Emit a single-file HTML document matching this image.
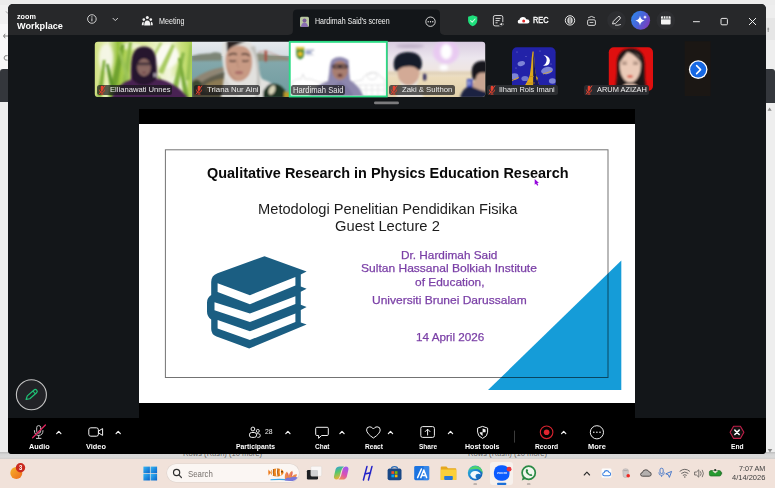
<!DOCTYPE html>
<html lang="en">
<head>
<meta charset="utf-8">
<title>Zoom Workplace - Meeting</title>
<style>
html,body{margin:0;padding:0;}
body{width:775px;height:488px;overflow:hidden;background:#f1f1f1;font-family:"Liberation Sans",sans-serif;}
#root{position:relative;width:775px;height:488px;overflow:hidden;background:#f3f3f3;}
.a{position:absolute;}
.t{position:absolute;white-space:nowrap;line-height:1;transform-origin:0 50%;display:block;}
svg{position:absolute;overflow:visible;}
</style>
</head>
<body>
<div id="root">

<!-- background app peeking behind the zoom window -->
<div class="a" style="left:0;top:0;width:775px;height:6px;background:#ececec;"></div>
<div class="a" style="left:0;top:5px;width:10px;height:18.500px;background:#f1f1f1;"></div>
<div class="a" style="left:0;top:23.500px;width:10px;height:46px;background:#f8f8f8;"></div>
<div class="a" style="left:0;top:69.300px;width:10px;height:32.500px;background:#34373c;border-radius:3px 0 0 0;"></div>
<div class="a" style="left:0;top:101.800px;width:10px;height:352px;background:#ededed;"></div>
<div class="a" style="left:764px;top:5px;width:11px;height:449px;background:#eeeeee;"></div>
<div class="a" style="left:764px;top:18px;width:14px;height:22px;background:#e6e6e6;border-radius:0 0 0 0;"></div>
<div class="a" style="left:764px;top:69.300px;width:10.500px;height:33.500px;background:#34373c;border-radius:0 3px 0 0;"></div>
<div class="a" style="left:0;top:452px;width:775px;height:7.200px;background:linear-gradient(#bdbdbd 0%,#d6d6d6 35%,#dadada 70%,#d2cfcd 100%);"></div>
<svg style="left:0;top:0" width="775" height="488" viewBox="0 0 775 488">
<path d="M767.500,110.800 L771.700,110.800 L769.600,107.600Z" fill="#8a8a8a"/>
<path d="M5.200,33.800 L3.600,36 L5.200,38.200 M3.600,36 L8,36" stroke="#666" stroke-width="0.800" fill="none"/>
<path d="M7.600,55.600 Q4.200,55 4,58 Q4.200,60.600 7.600,60.200" stroke="#666" stroke-width="0.800" fill="none"/>
<path d="M6,11.400 L8,13.600" stroke="#777" stroke-width="0.700"/>
<path d="M767.400,29 L769.200,29 M768.200,27.600 L768.200,32" stroke="#777" stroke-width="0.700"/>
</svg>


<div class="a" id="win" style="left:7.800px;top:4.200px;width:758.500px;height:449.400px;background:#131619;border-radius:5px 5px 4px 4px;overflow:hidden;">
  <div class="a" style="left:0;top:0;width:100%;height:30.600px;background:#27282a;"></div>
  <div class="a" style="left:0;top:414.200px;width:100%;height:40px;background:#000;"></div>
</div>

<!-- title bar -->
<svg style="left:0;top:0" width="775" height="488" viewBox="0 0 775 488">
<path d="M288.500,34.900 Q292.900,34.900 292.900,30.600 L292.900,14 Q292.900,9.600 297.300,9.600 L435.600,9.600 Q440,9.600 440,14 L440,30.600 Q440,34.900 444.400,34.900 Z" fill="#131619"/>
<!-- small avatar in tab -->
<rect x="300" y="16.800" width="9" height="10.200" rx="1.500" fill="#b9c7a0"/>
<path d="M301,27 Q301.500,22.500 304.500,22.500 Q307.500,22.500 308,27Z" fill="#8a6fb0"/>
<circle cx="304.500" cy="20.600" r="2" fill="#7a5c9a"/>
<!-- ... in circle -->
<circle cx="430.500" cy="21.700" r="4.700" fill="none" stroke="#e6e6e6" stroke-width="0.900"/>
<circle cx="428.200" cy="21.700" r="0.700" fill="#e6e6e6"/><circle cx="430.500" cy="21.700" r="0.700" fill="#e6e6e6"/><circle cx="432.800" cy="21.700" r="0.700" fill="#e6e6e6"/>
<!-- info icon -->
<circle cx="91.900" cy="19" r="4.300" fill="none" stroke="#e0e0e0" stroke-width="0.900"/>
<rect x="91.400" y="18.300" width="1" height="3" fill="#e0e0e0"/><circle cx="91.900" cy="16.900" r="0.650" fill="#e0e0e0"/>
<path d="M113,18.300 L115.300,20.600 L117.600,18.300" stroke="#e0e0e0" stroke-width="0.900" fill="none" stroke-linecap="round" stroke-linejoin="round"/>
<!-- people/paw icon -->
<circle cx="147.300" cy="17.600" r="1.500" fill="#f2f2f2"/><circle cx="143.800" cy="19.600" r="1.300" fill="#f2f2f2"/><circle cx="150.800" cy="19.600" r="1.300" fill="#f2f2f2"/>
<path d="M144.200,25.600 Q144.200,20.400 147.300,20.400 Q150.400,20.400 150.400,25.600Z" fill="#f2f2f2"/>
<path d="M141.800,25.200 Q141.800,21.800 143.700,21.800 L143.700,25.200Z M152.800,25.200 Q152.800,21.800 150.900,21.800 L150.900,25.200Z" fill="#f2f2f2"/>
<!-- shield -->
<path d="M472.700,15.200 L477.300,16.800 L477.300,20.600 Q477.300,24.400 472.700,26.300 Q468.100,24.400 468.100,20.600 L468.100,16.800Z" fill="#1ee07c"/>
<path d="M470.600,20.600 L472.200,22.200 L475,19" stroke="#c4f6da" stroke-width="1.100" fill="none" stroke-linecap="round" stroke-linejoin="round"/>
<!-- doc icon -->
<rect x="493.400" y="15.500" width="9.400" height="10.400" rx="1.700" fill="none" stroke="#dcdcdc" stroke-width="0.950"/>
<path d="M495.500,18.400 L500.600,18.400 M495.500,20.600 L499.600,20.600 M495.500,22.800 L497.600,22.800" stroke="#e6e6e6" stroke-width="0.950"/>
<rect x="499.300" y="22" width="4.600" height="4.600" fill="#27282a"/>
<path d="M499.800,23.700 L500.900,23.700 L502.200,22.600 L502.200,25.800 L500.900,24.800 L499.800,24.800Z" fill="#e6e6e6"/>
<path d="M503,23.300 Q503.800,24.200 503,25.200" stroke="#e6e6e6" stroke-width="0.500" fill="none"/>
<!-- REC cloud -->
<path d="M519.500,23.600 Q517.700,23.600 517.700,21.700 Q517.700,20 519.500,19.800 Q520,17 523,17 Q525.600,17 526.300,19.200 Q529.300,19 529.500,21.500 Q529.500,23.600 527.300,23.600Z" fill="#ffffff"/>
<circle cx="523.700" cy="21" r="1.500" fill="#e02828"/>
<!-- circle (globe) icon -->
<circle cx="570" cy="20.400" r="4.700" fill="none" stroke="#e6e6e6" stroke-width="1"/>
<ellipse cx="570" cy="20.400" rx="2.300" ry="3.200" fill="#bdbdbd" stroke="#e6e6e6" stroke-width="0.700"/>
<path d="M570,17.400 L570,23.800" stroke="#27282a" stroke-width="0.600"/>
<!-- device/cast icon -->
<rect x="587.600" y="19.800" width="7.800" height="5.600" rx="1.300" fill="none" stroke="#e6e6e6" stroke-width="0.900"/>
<path d="M589.600,22.500 L593.400,22.500" stroke="#e6e6e6" stroke-width="0.800"/>
<path d="M588.400,17.600 Q591.500,15 594.600,17.600" stroke="#e6e6e6" stroke-width="0.900" fill="none" stroke-linecap="round"/>
<!-- pen in circle -->
<circle cx="616.500" cy="20.400" r="9.300" fill="#2d2e31"/>
<path d="M612.600,24 L613.300,21.400 L617.900,16.800 Q619,15.900 620,16.900 Q620.900,17.900 620,18.900 L615.300,23.500Z" fill="none" stroke="#f0f0f0" stroke-width="0.900" stroke-linejoin="round"/>
<path d="M615.500,25.200 Q618,25.600 620.500,24.600" stroke="#f0f0f0" stroke-width="0.800" fill="none" stroke-linecap="round"/>
<!-- AI companion -->
<circle cx="640.600" cy="20.200" r="9.500" fill="url(#gai)"/>
<path d="M640,15.800 Q640.600,19.700 644.600,20.600 Q640.600,21.500 640,25.400 Q639.400,21.500 635.400,20.600 Q639.400,19.700 640,15.800Z" fill="#ffffff"/>
<path d="M645,15.200 Q645.300,16.800 646.900,17.100 Q645.300,17.400 645,19 Q644.700,17.400 643.100,17.100 Q644.700,16.800 645,15.200Z" fill="#ffffff"/>
<!-- clapper -->
<circle cx="665.800" cy="20.400" r="9.300" fill="#2d2e31"/>
<rect x="661" y="16.200" width="9.600" height="8.200" rx="0.900" fill="#f4f4f4"/>
<path d="M661,19 L670.600,19" stroke="#2d2e31" stroke-width="0.700"/>
<path d="M663.400,16 L663.400,18.600 M665.800,16 L665.800,18.600 M668.200,16 L668.200,18.600" stroke="#2d2e31" stroke-width="0.800"/>
<!-- window controls -->
<path d="M693,21.700 L699.800,21.700" stroke="#e8e8e8" stroke-width="1"/>
<rect x="721" y="18.400" width="6.400" height="6.400" rx="1" fill="none" stroke="#e8e8e8" stroke-width="1"/>
<path d="M749,18 L756,25 M756,18 L749,25" stroke="#f0f0f0" stroke-width="1"/>
</svg>
<span class="t" style="left:17.30px;top:13.18px;font-size:7.7px;font-weight:700;color:#ffffff;transform:scaleX(0.9401);">zoom</span>
<span class="t" style="left:17.30px;top:21.40px;font-size:9.8px;font-weight:700;color:#ffffff;transform:scaleX(0.9295);">Workplace</span>
<span class="t" style="left:158.60px;top:17.39px;font-size:8.4px;font-weight:400;color:#f0f0f0;transform:scaleX(0.8566);">Meeting</span>
<span class="t" style="left:315.40px;top:17.96px;font-size:8.2px;font-weight:400;color:#f4f4f4;transform:scaleX(0.8618);">Hardimah Said's screen</span>
<span class="t" style="left:532.80px;top:16.32px;font-size:8.6px;font-weight:400;color:#ffffff;transform:scaleX(0.8536);-webkit-text-stroke:0.350px #fff;">REC</span>
<!-- gallery strip -->
<svg style="left:0;top:0" width="775" height="488" viewBox="0 0 775 488">
<defs>
<filter id="bs" x="-10%" y="-10%" width="120%" height="120%"><feGaussianBlur stdDeviation="0.450"/></filter>
<filter id="b1" x="-20%" y="-20%" width="140%" height="140%"><feGaussianBlur stdDeviation="0.8"/></filter>
<filter id="b2" x="-20%" y="-20%" width="140%" height="140%"><feGaussianBlur stdDeviation="1.6"/></filter>
<filter id="b3" x="-30%" y="-30%" width="160%" height="160%"><feGaussianBlur stdDeviation="3"/></filter>
<clipPath id="c1"><path d="M97.800,41.700 L192,41.700 L192,96.900 L97.800,96.900 Q94.800,96.900 94.800,93.900 L94.800,44.700 Q94.800,41.700 97.800,41.700Z"/></clipPath>
<clipPath id="c2"><rect x="192" y="41.700" width="97" height="55.200"/></clipPath>
<clipPath id="c3"><rect x="290.700" y="42.800" width="95.200" height="52.700"/></clipPath>
<clipPath id="c4"><path d="M387.700,41.700 L482.200,41.700 Q485.200,41.700 485.200,44.700 L485.200,93.900 Q485.200,96.900 482.200,96.900 L387.700,96.900Z"/></clipPath>
<clipPath id="c5"><rect x="512" y="47.3" width="43.6" height="43.6" rx="5"/></clipPath>
<clipPath id="c6"><rect x="608.8" y="47.3" width="44.2" height="43.6" rx="5"/></clipPath>
<linearGradient id="g1" x1="0" x2="1" y1="0" y2="0">
 <stop offset="0" stop-color="#cfe07e"/><stop offset="0.140" stop-color="#e8f0bc"/><stop offset="0.240" stop-color="#97c23e"/>
 <stop offset="0.340" stop-color="#b6d65e"/><stop offset="0.480" stop-color="#dcea9e"/><stop offset="0.620" stop-color="#e8f0c0"/>
 <stop offset="0.760" stop-color="#f2f5dc"/><stop offset="0.880" stop-color="#cbe27e"/><stop offset="1" stop-color="#aed254"/>
</linearGradient>
<linearGradient id="g2s" x1="0" x2="0" y1="0" y2="1"><stop offset="0" stop-color="#e6eaee"/><stop offset="1" stop-color="#d4dce2"/></linearGradient>
<linearGradient id="g2w" x1="0" x2="0" y1="0" y2="1"><stop offset="0" stop-color="#86aaad"/><stop offset="1" stop-color="#6f9a9f"/></linearGradient>
<linearGradient id="g4" x1="0" x2="0" y1="0" y2="1"><stop offset="0" stop-color="#d8cbe0"/><stop offset="0.300" stop-color="#ece6ee"/><stop offset="0.520" stop-color="#efe6e2"/><stop offset="0.640" stop-color="#ecdcbc"/><stop offset="1" stop-color="#e0d0aa"/></linearGradient>
<linearGradient id="gai" x1="0" y1="0.200" x2="1" y2="0.800"><stop offset="0" stop-color="#2f86ea"/><stop offset="0.500" stop-color="#4a62d8"/><stop offset="1" stop-color="#8338b8"/></linearGradient>
</defs>

<!-- tile 1 : grass + purple hijab -->
<g clip-path="url(#c1)">
 <rect x="94" y="41" width="99" height="57" fill="url(#g1)"/>
 <g filter="url(#b2)">
  <ellipse cx="106" cy="58" rx="7" ry="14" fill="#f6f7ea" opacity="0.900"/>
  <ellipse cx="166" cy="56" rx="13" ry="12" fill="#fbfbf3" opacity="0.950"/>
  <ellipse cx="178" cy="84" rx="9" ry="9" fill="#f4f6e4" opacity="0.800"/>
  <ellipse cx="131" cy="46" rx="10" ry="4" fill="#f4f6de" opacity="0.800"/>
 </g>
 <g filter="url(#b1)">
  <path d="M97,97 L103,60 L105.500,60 L102,97Z" fill="#7fae3a"/>
  <path d="M108,97 L121,44 L124.500,45 L115,97Z" fill="#6fa22f"/>
  <path d="M112,97 L106,64 L108.500,64 L117,97Z" fill="#5d942a"/>
  <path d="M120,97 L129,42 L132,42 L126,97Z" fill="#8fba4a"/>
  <path d="M126,80 L118,50 L120.500,50 L130,80Z" fill="#9cc458"/>
  <path d="M158,72 L172,44 L175,45.500 L163,74Z" fill="#a9cb62"/>
  <path d="M150,58 L160,42 L162.500,43 L153,60Z" fill="#b7d376"/>
  <path d="M170,97 L182,52 L185,53 L176,97Z" fill="#8ab848"/>
  <path d="M184,97 L178,58 L180.500,58 L189,97Z" fill="#79ab3a"/>
  <path d="M164,97 L157,76 L159.500,76 L168,97Z" fill="#a3c765"/>
  <path d="M186,80 L190,44 L192.500,44 L190,80Z" fill="#9ac254"/>
 </g>
 <g filter="url(#b1)">
  <path d="M111,99 Q116,84 131,79.500 Q130.500,70 131.500,61 Q133,46.600 144,46.600 Q155,46.600 156.200,61 Q157.200,70 156.600,78.500 Q176,82 189,99 Z" fill="#4a2352"/>
  <path d="M132.400,79.500 Q131,68 132,60 Q133.600,47 144,47 Q154.400,47 155.700,60 Q156.800,70 156,79.500 Q150,85 144,85 Q138,85 132.400,79.500Z" fill="#27152d"/>
  <ellipse cx="144" cy="67.400" rx="6.900" ry="8.800" fill="#8a6862"/>
  <rect x="137.600" y="62.400" width="12.800" height="2.800" rx="1.200" fill="#3a2c36" opacity="0.900"/>
  <ellipse cx="144" cy="72.600" rx="2.200" ry="0.900" fill="#6d3f45"/>
  <ellipse cx="154.600" cy="75" rx="1" ry="2" fill="#cfc6d6"/>
 </g>
</g>

<!-- tile 2 : bridge bg + white hijab -->
<g clip-path="url(#c2)">
 <rect x="192" y="41" width="98" height="16" fill="url(#g2s)"/>
 <rect x="192" y="56" width="98" height="42" fill="url(#g2w)"/>
 <g filter="url(#b1)">
  <path d="M192,56 Q200,53 210,53.500 Q217,51 222,54 L222,60.500 L192,61Z" fill="#7d8577"/>
  <path d="M254,54 Q262,52 270,55 Q280,56 289,57 L289,60.500 L254,61Z" fill="#8b8d7c"/>
  <rect x="264.600" y="50.500" width="2.400" height="11" fill="#a8473a"/>
  <path d="M258,52 L266,51 L289,60" stroke="#b06a5a" stroke-width="0.600" fill="none"/>
  <path d="M192,80 Q205,70 226,66.500 L228,70 Q212,75 200,86 L198,98 L192,98Z" fill="#8f8573"/>
  <path d="M196,86 Q210,75 228,71 L229,78 Q215,80 206,90 L204,98 L196,98Z" fill="#625e4e"/>
  <path d="M192,82 Q197,77 201,82 L203,98 L192,98Z" fill="#3e4a30"/>
  <path d="M192,92 L224,90 L224,98 L192,98Z" fill="#4a4434"/>
  <path d="M206,84 Q218,78 228,79 L228,90 L206,92Z" fill="#8c7a52"/>
 </g>
 <g filter="url(#b1)">
  <path d="M221,98 Q223.500,84 224.500,74 Q220.500,54 223,42 L249,41 Q257,50 258.500,64 Q259,74 262,79 Q276,83 283,98Z" fill="#e2e1de"/>
  <path d="M226.500,41 L246,41 Q240,43.500 234,46 Q229,48.500 227,53Z" fill="#2a2422"/>
  <path d="M225.500,58 Q226.500,46.500 238,45.500 Q250.500,45.500 252,58 Q253,68 249,75 Q244,81.500 238.500,81.500 Q232,81.500 228,74 Q225,67 225.500,58Z" fill="#c89a84"/>
  <path d="M228.500,55.600 Q232.500,52 237,54.600" stroke="#3d2a24" stroke-width="1.400" fill="none"/>
  <path d="M241.500,54.600 Q245.500,52.400 249.700,56" stroke="#3d2a24" stroke-width="1.400" fill="none"/>
  <path d="M229.500,60.400 Q232.500,62.400 235.800,60.600" stroke="#3f2b26" stroke-width="1.300" fill="none"/>
  <path d="M242.300,60.600 Q245.600,62.400 248.800,60.200" stroke="#3f2b26" stroke-width="1.300" fill="none"/>
  <path d="M237.600,60 Q236.600,66 238.800,68.200" stroke="#b58974" stroke-width="0.900" fill="none"/>
  <ellipse cx="239" cy="72.600" rx="4.200" ry="1.700" fill="#a96a66"/>
  <path d="M228,68 Q230,76 236,80" stroke="#b58a76" stroke-width="1.600" fill="none" opacity="0.600"/>
  <path d="M250,47 Q257.500,58 257,80 L255,98 L259,98 Q262,72 255,46Z" fill="#c3c3bf"/>
  <path d="M224.500,74 Q226,82 232,86 Q238,88 246,84 Q244,92 236,98 L221,98 Q223,86 224.500,74Z" fill="#d5d4d0"/>
  <path d="M263,98 Q262,88 270,84 Q280,82 286,92 L289,98Z" fill="#1f3320"/>
  <ellipse cx="272" cy="90" rx="3" ry="5" fill="#d8d4b8" transform="rotate(25 272 90)"/>
  <rect x="284" y="92" width="6" height="6" fill="#b79a2a"/>
 </g>
</g>

<!-- tile 3 : active speaker (green border) -->
<rect x="289.750" y="41.850" width="97.100" height="54.600" fill="#ffffff" stroke="#2bdc85" stroke-width="1.900"/>
<g clip-path="url(#c3)">
 <g filter="url(#b1)" opacity="0.9">
  <path d="M292,96 L292,82 Q296,78 301,79 L303,74 L305,79 Q312,78 318,82 L326,82 L326,96Z" fill="none" stroke="#d4d4d6" stroke-width="0.800"/>
  <path d="M296,96 L296,86 L324,86 L324,96 M300,86 L300,96 M306,86 L306,96 M312,86 L312,96 M318,86 L318,96" stroke="#dcdcde" stroke-width="0.700" fill="none"/>
  <path d="M352,96 L352,82 L362,80 Q366,72 370,74 Q376,70 380,76 L385,80 L385,96Z" fill="none" stroke="#d0d0d3" stroke-width="0.800"/>
  <path d="M356,96 L356,85 L384,85 M360,85 L360,96 M366,85 L366,96 M372,85 L372,96 M378,85 L378,96 M356,90 L385,90" stroke="#d6d6d9" stroke-width="0.700" fill="none"/>
  <ellipse cx="372" cy="76" rx="5" ry="3.500" fill="none" stroke="#d4d4d6" stroke-width="0.800"/>
 </g>
 <g filter="url(#b1)">
  <path d="M296.200,47 L304.200,47 L304.200,54 Q304.200,58 300.200,59.500 Q296.200,58 296.200,54Z" fill="#3f8a3a"/>
  <path d="M296.600,47 L303.800,47 L303.800,49.500 L296.600,49.500Z" fill="#e5c531"/>
  <circle cx="300.200" cy="54" r="2.300" fill="#efc321"/>
  <rect x="305.500" y="49.500" width="8.500" height="1.300" fill="#9aa0b8"/>
  <rect x="305.500" y="51.800" width="6" height="1.500" fill="#4a64a8"/>
  <rect x="305.500" y="54.300" width="8" height="0.900" fill="#b4b8c8"/>
 </g>
 <g filter="url(#b1)">
  <path d="M308,98 Q314,86 328,81 Q329.500,72 329.800,66 Q330.500,57 340,57 Q349,57.300 349,66 Q349,73 350,80 Q360,86 364,98Z" fill="#8d87ad"/>
  <path d="M326,98 Q330,86 340,82 Q350,86 354,98Z" fill="#7f79a2"/>
  <ellipse cx="340" cy="70.400" rx="7.900" ry="9.800" fill="#a97e70"/>
  <path d="M331.500,64 Q340,57.500 348.500,64 L348.500,60 Q340,55 331.500,60Z" fill="#8d87ad"/>
  <rect x="332" y="64.600" width="16" height="3.800" rx="1.600" fill="#32282c"/>
  <rect x="333.400" y="65.500" width="5.400" height="2.100" rx="0.900" fill="#8b675e"/>
  <rect x="341.200" y="65.500" width="5.400" height="2.100" rx="0.900" fill="#8b675e"/>
  <ellipse cx="340" cy="75.200" rx="2.500" ry="1.500" fill="#5e2f30"/>
 </g>
</g>

<!-- tile 4 : room with two people -->
<g clip-path="url(#c4)">
 <rect x="387" y="41" width="99" height="57" fill="url(#g4)"/>
 <g filter="url(#b2)">
  <ellipse cx="446" cy="52" rx="13" ry="12" fill="#e9c8f2" opacity="0.9"/>
  <ellipse cx="446.200" cy="51.700" rx="5.600" ry="7.600" fill="#ffffff"/>
  <ellipse cx="443.800" cy="67.400" rx="4.200" ry="3" fill="#ffffff"/>
  <ellipse cx="410" cy="46" rx="14" ry="2" fill="#bfb0c8"/>
  <rect x="387" y="72" width="99" height="2" fill="#cdb98e" opacity="0.7"/>
 </g>
 <g filter="url(#b1)">
  <rect x="423" y="73.500" width="3.400" height="7" rx="1.500" fill="#3b3560"/>
  <path d="M396,98 Q398,90 402,86 Q397,78 398,68 L418,66 Q421,78 416,86 Q421,90 424,98Z" fill="#e8e4de"/>
  <ellipse cx="408.500" cy="73" rx="10.800" ry="12.500" fill="#d3aa96"/>
  <path d="M393.800,66 Q392.500,53 407,52 Q421.500,51.500 422,64 Q421.500,69 419,70.500 Q414,65 406,66.500 Q400,67 397,71.500 Q394,70 393.800,66Z" fill="#191a2a"/>
  <path d="M470,98 Q470,84 476,80 Q471,70 476,64 Q481,60 486,62 L486,98Z" fill="#c9a592"/>
  <path d="M472.500,78 Q469.500,64.500 478,61.500 Q484,60 487,62 L487,73 Q480,71.500 477,75 L475,81Z" fill="#15151f"/>
  <path d="M460,98 Q462,88 470,86 L480,90 L487,92 L487,98Z" fill="#1b2142"/>
  <rect x="467" y="79" width="5.500" height="8" fill="#2c3fb6"/>
  <rect x="468.600" y="80.500" width="1.200" height="5" fill="#dfe3f5"/>
 </g>
</g>

<!-- tile 5 : avatar (eiffel / night sky) -->
<g clip-path="url(#c5)">
 <rect x="511" y="46" width="46" height="46" fill="#2222a8"/>
 <g filter="url(#bs)">
  <ellipse cx="521.300" cy="63.600" rx="3.800" ry="2.400" fill="#7d84d6" transform="rotate(-15 521.300 63.600)"/>
  <ellipse cx="547" cy="70.500" rx="6" ry="3.500" fill="#7d84d6" transform="rotate(-12 547 70.500)"/>
  <ellipse cx="514.500" cy="76.500" rx="4" ry="3.300" fill="#7d84d6"/>
  <ellipse cx="525" cy="78.500" rx="3.600" ry="2.600" fill="#6f76cf"/>
  <ellipse cx="552.500" cy="81" rx="3.600" ry="2.800" fill="#7d84d6"/>
  <path d="M512,80.500 L519,77.500" stroke="#d9a21f" stroke-width="1"/>
  <path d="M543,74 L552,71" stroke="#c9a246" stroke-width="0.900"/>
  <circle cx="517" cy="52" r="0.400" fill="#cfd2ff"/><circle cx="526" cy="56.500" r="0.400" fill="#cfd2ff"/><circle cx="540" cy="51" r="0.400" fill="#cfd2ff"/><circle cx="551" cy="64" r="0.400" fill="#cfd2ff"/><circle cx="516" cy="68" r="0.400" fill="#cfd2ff"/>
  <path d="M532.500,51.500 L533.700,51.500 L534.600,64 Q535.200,74 537.500,80 L541.500,92 L519,92 Q527.500,84 529.800,75 Q531.300,67 531.700,58Z" fill="#dca81f"/>
  <path d="M533.300,51.500 L534.600,64 Q535.200,74 537.500,80 L541.500,92 L533.100,92Z" fill="#17185a"/>
  <path d="M535.800,76 L538,78 L536.800,80.400Z" fill="#dca81f"/>
  <path d="M529.400,76.500 L534,76.500 M527,83 L535,83" stroke="#b98712" stroke-width="0.700"/>
  <path d="M543.600,55 Q548.600,58 545.600,63.500 Q544.600,65 543,65.600 Q549.600,66.600 549.900,60.500 Q549.600,56 543.600,55Z" fill="#ffffff"/>
 </g>
</g>

<!-- tile 6 : avatar (portrait on red) -->
<g clip-path="url(#c6)">
 <rect x="608" y="46" width="46" height="46" fill="#df0f0f"/>
 <g filter="url(#b1)">
  <path d="M614.500,92 Q617.500,78 617,66 Q616.500,49 630.500,48.500 Q644,48.500 644.500,64 Q644,78 646.500,92Z" fill="#1d1514"/>
  <path d="M620,92 Q622,86 626,84 L634,84 Q639,86 641,92Z" fill="#e6c3b0"/>
  <path d="M619.800,65 Q619.800,52.500 630,52 Q640.600,52.500 640.800,65 Q640.800,74.500 636,80 Q630,85 624.500,80 Q619.800,74.500 619.800,65Z" fill="#ebcab8"/>
  <path d="M619.400,63 Q620,52 628,51.200 Q624,56 619.400,63Z M627,51.400 Q638,50.600 641.200,63 Q636,55 627,51.400Z" fill="#1d1514"/>
  <path d="M622.200,63.800 L627,63.800 M633,63.800 L638,63.800" stroke="#5b3f36" stroke-width="1"/>
  <path d="M622,61.800 L627,61.400 M633,61.400 L638,61.800" stroke="#7b5a4e" stroke-width="0.600"/>
  <ellipse cx="630" cy="76.400" rx="2.900" ry="1.200" fill="#d8402f"/>
  <path d="M622,92 L627,86 L630,90 L633,86 L638,92Z" fill="#f2f2f2"/>
 </g>
</g>

<!-- next-page arrow -->
<rect x="684.600" y="41.200" width="26" height="54.800" fill="#1b1714"/>
<circle cx="698.200" cy="69.600" r="9.300" fill="#ffffff"/>
<circle cx="698.200" cy="69.600" r="8" fill="#1668e3"/>
<path d="M696.600,65.600 L700.600,69.600 L696.600,73.600" stroke="#fff" stroke-width="1.500" fill="none" stroke-linecap="round" stroke-linejoin="round"/>
<!-- drag handle -->
<rect x="374" y="101.500" width="25" height="2.800" rx="1.400" fill="#7b7b7d"/>
</svg>
<div class="a" style="left:96.6px;top:84.5px;width:75.2px;height:10.7px;background:rgba(24,24,27,0.700);border-radius:2.5px;"></div><svg style="left:98.0px;top:84.8px" width="8" height="10" viewBox="0 0 8 10"><rect x="2.7" y="0.8" width="2.6" height="5" rx="1.3" fill="#e8412f"/><path d="M1.3,4.6 Q1.3,7.4 4,7.4 Q6.700,7.400 6.700,4.600 M4,7.400 L4,9 M2.500,9.200 L5.500,9.200" stroke="#e8412f" stroke-width="0.800" fill="none"/><path d="M7,0.600 L1,9.400" stroke="#e8412f" stroke-width="1"/></svg><span class="t" style="left:109.60px;top:86.11px;font-size:7.9px;font-weight:400;color:#ececec;transform:scaleX(0.9666);">Ellianawati Unnes</span>
<div class="a" style="left:194px;top:84.5px;width:65.8px;height:10.7px;background:rgba(24,24,27,0.700);border-radius:2.5px;"></div><svg style="left:195.4px;top:84.8px" width="8" height="10" viewBox="0 0 8 10"><rect x="2.7" y="0.8" width="2.6" height="5" rx="1.3" fill="#e8412f"/><path d="M1.3,4.6 Q1.3,7.4 4,7.4 Q6.700,7.400 6.700,4.600 M4,7.400 L4,9 M2.500,9.200 L5.500,9.200" stroke="#e8412f" stroke-width="0.800" fill="none"/><path d="M7,0.600 L1,9.400" stroke="#e8412f" stroke-width="1"/></svg><span class="t" style="left:206.80px;top:86.11px;font-size:7.9px;font-weight:400;color:#ececec;transform:scaleX(0.9931);">Triana Nur Aini</span>
<div class="a" style="left:291.2px;top:84.5px;width:54.2px;height:10.7px;background:rgba(24,24,27,0.700);border-radius:2.5px;"></div><span class="t" style="left:293.00px;top:85.69px;font-size:8.4px;font-weight:400;color:#ececec;transform:scaleX(0.9107);">Hardimah Said</span>
<div class="a" style="left:388.8px;top:84.5px;width:65.8px;height:10.7px;background:rgba(24,24,27,0.700);border-radius:2.5px;"></div><svg style="left:390.2px;top:84.8px" width="8" height="10" viewBox="0 0 8 10"><rect x="2.7" y="0.8" width="2.6" height="5" rx="1.3" fill="#e8412f"/><path d="M1.3,4.6 Q1.3,7.4 4,7.4 Q6.700,7.400 6.700,4.600 M4,7.400 L4,9 M2.500,9.200 L5.500,9.200" stroke="#e8412f" stroke-width="0.800" fill="none"/><path d="M7,0.600 L1,9.400" stroke="#e8412f" stroke-width="1"/></svg><span class="t" style="left:401.80px;top:86.11px;font-size:7.9px;font-weight:400;color:#ececec;transform:scaleX(0.9810);">Zaki &amp; Sulthon</span>
<div class="a" style="left:486.6px;top:84.5px;width:71.0px;height:10.7px;background:#2b2d30;border-radius:2.5px;"></div><svg style="left:488.0px;top:84.8px" width="8" height="10" viewBox="0 0 8 10"><rect x="2.7" y="0.8" width="2.6" height="5" rx="1.3" fill="#e8412f"/><path d="M1.3,4.6 Q1.3,7.4 4,7.4 Q6.700,7.400 6.700,4.600 M4,7.400 L4,9 M2.500,9.200 L5.500,9.200" stroke="#e8412f" stroke-width="0.800" fill="none"/><path d="M7,0.600 L1,9.400" stroke="#e8412f" stroke-width="1"/></svg><span class="t" style="left:499.40px;top:86.11px;font-size:7.9px;font-weight:400;color:#ececec;transform:scaleX(0.9485);">Ilham Rois Imani</span>
<div class="a" style="left:583.8px;top:84.5px;width:64.8px;height:10.7px;background:rgba(43,45,48,0.92);border-radius:2.5px;"></div><svg style="left:585.2px;top:84.8px" width="8" height="10" viewBox="0 0 8 10"><rect x="2.7" y="0.8" width="2.6" height="5" rx="1.3" fill="#e8412f"/><path d="M1.3,4.6 Q1.3,7.4 4,7.4 Q6.700,7.400 6.700,4.600 M4,7.400 L4,9 M2.500,9.200 L5.500,9.200" stroke="#e8412f" stroke-width="0.800" fill="none"/><path d="M7,0.600 L1,9.400" stroke="#e8412f" stroke-width="1"/></svg><span class="t" style="left:596.80px;top:86.11px;font-size:7.9px;font-weight:400;color:#ececec;transform:scaleX(0.9414);">ARUM AZIZAH</span>
<!-- shared screen -->
<div class="a" style="left:139.100px;top:108.700px;width:495.600px;height:310.300px;background:#000;"></div>
<div class="a" id="slide" style="left:139.100px;top:124.200px;width:495.600px;height:278.900px;background:#fff;"></div>
<svg style="left:0;top:0" width="775" height="488" viewBox="0 0 775 488"><polygon points="621.300,260.500 621.300,390 488,390" fill="#159cd8"/><rect x="165.400" y="149.800" width="442.600" height="227.700" fill="none" stroke="#000" stroke-opacity="0.550" stroke-width="1"/><polygon points="609,273 621.5,260.5 621.5,390 609,390" fill="#159cd8" opacity="0.0"/></svg>
<svg style="left:0;top:0" width="775" height="488" viewBox="0 0 775 488">
<path fill="#1b5e82" d="M264.5,256.3 L306.6,271.4 L300.8,274.4 L300.8,286.6 L306.6,288.7 L300.8,291.8 L300.8,304.8 L306.6,306.9 L300.8,310 L300.8,322.4 L306.6,324.6 L249.2,348.6 L216.5,336.6 Q211.2,334.4 211.2,329 L211.2,319.5 Q207,316.5 207,311.5 L207,302.5 Q207,297.5 211.2,295 L211.2,282 Q211.2,275.5 217.5,273.2 Z"/>
<polygon fill="#fff" points="217.6,283.3 249.9,295.2 295.4,276.9 295.4,285.6 249.9,304.2 217.6,292.1"/>
<polygon fill="#fff" points="214.5,302.2 249.9,313.5 295.4,296.2 295.4,303.9 249.9,322.1 214.5,310.3"/>
<polygon fill="#fff" points="217.6,319.9 249.9,331.3 295.4,313.4 295.4,322 249.9,340 217.6,328.5"/>
</svg>
<span class="t" style="left:206.60px;top:165.94px;font-size:14.6px;font-weight:700;color:#0a0a0a;transform:scaleX(0.9905);">Qualitative Research in Physics Education Research</span>
<span class="t" style="left:257.80px;top:202.04px;font-size:14.6px;font-weight:400;color:#1c1c1c;transform:scaleX(1.0051);">Metodologi Penelitian Pendidikan Fisika</span>
<span class="t" style="left:335.20px;top:219.34px;font-size:14.6px;font-weight:400;color:#1c1c1c;transform:scaleX(1.0098);">Guest Lecture 2</span>
<span class="t" style="left:401.20px;top:248.58px;font-size:11.6px;font-weight:400;color:#7a3fa6;transform:scaleX(1.0171);-webkit-text-stroke:0.250px #7a3fa6;">Dr. Hardimah Said</span>
<span class="t" style="left:361.20px;top:261.98px;font-size:11.6px;font-weight:400;color:#7a3fa6;transform:scaleX(1.0378);-webkit-text-stroke:0.250px #7a3fa6;">Sultan Hassanal Bolkiah Institute</span>
<span class="t" style="left:414.60px;top:275.78px;font-size:11.6px;font-weight:400;color:#7a3fa6;transform:scaleX(1.0278);-webkit-text-stroke:0.250px #7a3fa6;">of Education,</span>
<span class="t" style="left:372.00px;top:293.78px;font-size:11.6px;font-weight:400;color:#7a3fa6;transform:scaleX(1.0350);-webkit-text-stroke:0.250px #7a3fa6;">Universiti Brunei Darussalam</span>
<span class="t" style="left:415.80px;top:330.58px;font-size:11.6px;font-weight:400;color:#7a3fa6;transform:scaleX(1.0100);-webkit-text-stroke:0.250px #7a3fa6;">14 April 2026</span>
<svg style="left:0;top:0" width="775" height="488" viewBox="0 0 775 488"><path d="M534.700,179.100 L534.700,184.700 L536,183.700 L537.200,185.700 L538.300,185.100 L537.200,183.100 L539,182.900 Z" fill="#9508dc"/></svg>
<!-- annotate button + bottom toolbar -->
<svg style="left:0;top:0" width="775" height="488" viewBox="0 0 775 488">
<!-- annotate pen -->
<circle cx="31.400" cy="394.800" r="15" fill="#222327" stroke="#c4c4c4" stroke-width="1.100"/>
<g transform="translate(31.400 394.800) rotate(-41)">
<path d="M-7,0 L-3.800,-1.900 L5.200,-1.900 Q7,-1.900 7,0 Q7,1.900 5.200,1.900 L-3.800,1.900Z" fill="none" stroke="#1fc477" stroke-width="1.200" stroke-linejoin="round"/>
<path d="M3.600,-1.900 L3.600,1.900" stroke="#1fc477" stroke-width="1.100"/>
</g>
<!-- audio (muted mic) -->
<rect x="36.700" y="425.600" width="4" height="7.600" rx="2" fill="none" stroke="#c8c8c8" stroke-width="1"/>
<path d="M34.400,430.600 Q34.400,435.400 38.700,435.400 Q43,435.400 43,430.600 M38.700,435.400 L38.700,438.200 M36.400,438.400 L41,438.400" stroke="#c8c8c8" stroke-width="1" fill="none" stroke-linecap="round"/>
<path d="M45.400,425 L32.600,437.800" stroke="#e0245e" stroke-width="1.300" stroke-linecap="round"/>
<path d="M56.7,433.6 L58.8,431.4 L60.9,433.6" stroke="#f2f2f2" stroke-width="1.250" fill="none" stroke-linecap="round" stroke-linejoin="round"/>
<!-- video -->
<rect x="88.800" y="427.800" width="9.600" height="8.400" rx="2" fill="none" stroke="#f2f2f2" stroke-width="1"/>
<path d="M98.600,431 L102.600,428.600 L102.600,435.400 L98.600,433Z" fill="none" stroke="#f2f2f2" stroke-width="1" stroke-linejoin="round"/>
<path d="M116.1,433.6 L118.2,431.4 L120.3,433.6" stroke="#f2f2f2" stroke-width="1.250" fill="none" stroke-linecap="round" stroke-linejoin="round"/>
<!-- participants -->
<circle cx="252.900" cy="429" r="1.900" fill="none" stroke="#f2f2f2" stroke-width="1"/>
<rect x="249.400" y="432.500" width="7.200" height="4.900" rx="2.300" fill="none" stroke="#f2f2f2" stroke-width="1"/>
<circle cx="257.800" cy="430.900" r="1.500" fill="none" stroke="#f2f2f2" stroke-width="0.900"/>
<path d="M256.800,433.700 L258.400,433.700 Q260.300,433.700 260.300,435.600 Q260.300,437.400 258.400,437.400 L257.400,437.400" fill="none" stroke="#f2f2f2" stroke-width="0.900"/>
<path d="M285.8,433.6 L287.9,431.4 L290.0,433.6" stroke="#f2f2f2" stroke-width="1.250" fill="none" stroke-linecap="round" stroke-linejoin="round"/>
<!-- chat -->
<path d="M316.800,427.300 L327.200,427.300 Q328.300,427.300 328.300,428.400 L328.300,434.400 Q328.300,435.500 327.200,435.500 L321.600,435.500 L318.600,438.300 L318.600,435.500 L316.800,435.500 Q315.700,435.500 315.700,434.400 L315.700,428.400 Q315.700,427.300 316.800,427.300Z" fill="none" stroke="#f2f2f2" stroke-width="1" stroke-linejoin="round"/>
<path d="M339.9,433.6 L342.0,431.4 L344.1,433.6" stroke="#f2f2f2" stroke-width="1.250" fill="none" stroke-linecap="round" stroke-linejoin="round"/>
<!-- react heart -->
<path d="M373.400,438 Q366.600,433.600 366.600,429.900 Q366.600,426.800 369.700,426.800 Q372,426.800 373.400,429 Q374.800,426.800 377.100,426.800 Q380.200,426.800 380.200,429.900 Q380.200,433.600 373.400,438Z" fill="none" stroke="#f2f2f2" stroke-width="1" stroke-linejoin="round"/>
<path d="M388.4,433.6 L390.5,431.4 L392.6,433.6" stroke="#f2f2f2" stroke-width="1.250" fill="none" stroke-linecap="round" stroke-linejoin="round"/>
<!-- share -->
<rect x="420.800" y="426.600" width="13.600" height="10.800" rx="1.800" fill="none" stroke="#f2f2f2" stroke-width="1"/>
<path d="M427.600,435 L427.600,429.400 M425.200,431.600 L427.600,429.200 L430,431.600" stroke="#f2f2f2" stroke-width="1" fill="none" stroke-linecap="round" stroke-linejoin="round"/>
<path d="M448.4,433.6 L450.5,431.4 L452.6,433.6" stroke="#f2f2f2" stroke-width="1.250" fill="none" stroke-linecap="round" stroke-linejoin="round"/>
<!-- host tools -->
<path d="M482.600,426.400 L487.600,428.100 L487.600,432.200 Q487.600,436.300 482.600,438.400 Q477.600,436.300 477.600,432.200 L477.600,428.100Z" fill="none" stroke="#f2f2f2" stroke-width="1" stroke-linejoin="round"/>
<path d="M482.600,428.600 L485.600,429.600 L485.600,432.200 L482.600,432.200Z M482.600,432.200 L482.600,436 Q479.800,434.600 479.600,432.200Z" fill="#f2f2f2"/>
<!-- divider -->
<rect x="514" y="430.600" width="0.800" height="12" fill="#4a4a4a"/>
<!-- record -->
<circle cx="546.600" cy="432.300" r="6.300" fill="none" stroke="#d8232f" stroke-width="1.100"/>
<circle cx="546.600" cy="432.300" r="2.800" fill="#e1242f"/>
<path d="M561.6,433.6 L563.7,431.4 L565.8,433.6" stroke="#f2f2f2" stroke-width="1.250" fill="none" stroke-linecap="round" stroke-linejoin="round"/>
<!-- more -->
<circle cx="596.900" cy="432.300" r="6.600" fill="none" stroke="#f2f2f2" stroke-width="1"/>
<circle cx="593.800" cy="432.300" r="0.800" fill="#f2f2f2"/><circle cx="596.900" cy="432.300" r="0.800" fill="#f2f2f2"/><circle cx="600" cy="432.300" r="0.800" fill="#f2f2f2"/>
<!-- end -->
<path d="M733.600,426.200 L740.400,426.200 L743.900,432.300 L740.400,438.400 L733.600,438.400 L730.100,432.300Z" fill="#111" stroke="#c21f4a" stroke-width="1.100" stroke-linejoin="round"/>
<path d="M734.800,430.100 L739.200,434.500 M739.200,430.100 L734.800,434.500" stroke="#ffffff" stroke-width="1.500" stroke-linecap="round"/>
</svg>
<span class="t" style="left:28.90px;top:443.15px;font-size:7.5px;font-weight:700;color:#ffffff;transform:scaleX(0.9697);">Audio</span>
<span class="t" style="left:85.90px;top:443.15px;font-size:7.5px;font-weight:700;color:#ffffff;transform:scaleX(0.9810);">Video</span>
<span class="t" style="left:235.90px;top:443.15px;font-size:7.5px;font-weight:700;color:#ffffff;transform:scaleX(0.9084);">Participants</span>
<span class="t" style="left:314.90px;top:443.15px;font-size:7.5px;font-weight:700;color:#ffffff;transform:scaleX(0.8700);">Chat</span>
<span class="t" style="left:364.90px;top:443.15px;font-size:7.5px;font-weight:700;color:#ffffff;transform:scaleX(0.8811);">React</span>
<span class="t" style="left:419.00px;top:443.15px;font-size:7.5px;font-weight:700;color:#ffffff;transform:scaleX(0.8731);">Share</span>
<span class="t" style="left:465.40px;top:443.15px;font-size:7.5px;font-weight:700;color:#ffffff;transform:scaleX(0.9409);">Host tools</span>
<span class="t" style="left:535.20px;top:443.15px;font-size:7.5px;font-weight:700;color:#ffffff;transform:scaleX(0.8978);">Record</span>
<span class="t" style="left:588.20px;top:443.15px;font-size:7.5px;font-weight:700;color:#ffffff;transform:scaleX(0.9934);">More</span>
<span class="t" style="left:730.60px;top:443.15px;font-size:7.5px;font-weight:700;color:#ffffff;transform:scaleX(0.8895);">End</span>
<span class="t" style="left:265.40px;top:428.11px;font-size:7.2px;font-weight:400;color:#f2f2f2;transform:scaleX(0.9489);">28</span>
<!-- windows taskbar -->
<div class="a" style="left:0;top:459px;width:775px;height:29px;background:#f1e2da;"></div>
<div class="a" style="left:166.600px;top:464.200px;width:132.200px;height:18.300px;border-radius:9.200px;background:#fbf6f3;box-shadow:0 0 0 0.600px #ded4ce;"></div>
<div class="a" style="left:490px;top:462px;width:23.400px;height:23px;border-radius:3px;background:#f7f1ed;"></div>
<svg style="left:0;top:0" width="775" height="488" viewBox="0 0 775 488">
<defs>
<filter id="b0" x="-10%" y="-10%" width="120%" height="120%"><feGaussianBlur stdDeviation="0.350"/></filter>
<linearGradient id="gw" x1="0" y1="0" x2="1" y2="1"><stop offset="0" stop-color="#36b7f5"/><stop offset="1" stop-color="#0a63c9"/></linearGradient>
<linearGradient id="gor" x1="0" y1="0" x2="1" y2="1"><stop offset="0" stop-color="#f6b32a"/><stop offset="1" stop-color="#ee6a1c"/></linearGradient>
<linearGradient id="gcp" x1="0" y1="0" x2="1" y2="1"><stop offset="0" stop-color="#2f7fe8"/><stop offset="0.5" stop-color="#b455d8"/><stop offset="1" stop-color="#f39a3c"/></linearGradient>
<linearGradient id="ged" x1="0" y1="0" x2="1" y2="1"><stop offset="0" stop-color="#37c6d0"/><stop offset="0.5" stop-color="#1b7fd4"/><stop offset="1" stop-color="#1556a8"/></linearGradient>
<linearGradient id="gcpa" x1="0" y1="0" x2="0.300" y2="1"><stop offset="0" stop-color="#2a9ae8"/><stop offset="0.500" stop-color="#58c86a"/><stop offset="1" stop-color="#f2b132"/></linearGradient>
<linearGradient id="gcpb" x1="0.700" y1="0" x2="0.300" y2="1"><stop offset="0" stop-color="#9a5af0"/><stop offset="0.550" stop-color="#d850b8"/><stop offset="1" stop-color="#f08a5a"/></linearGradient>
</defs>
<!-- left widget -->
<circle cx="16.300" cy="473.100" r="6" fill="url(#gor)"/>
<circle cx="20.500" cy="467.700" r="4.700" fill="#c9291f"/>
<!-- windows logo -->
<rect x="143.400" y="466.600" width="6.500" height="6.600" fill="url(#gw)"/><rect x="150.600" y="466.600" width="6.500" height="6.600" fill="url(#gw)"/>
<rect x="143.400" y="473.900" width="6.500" height="6.600" fill="url(#gw)"/><rect x="150.600" y="473.900" width="6.500" height="6.600" fill="url(#gw)"/>
<!-- search magnifier -->
<circle cx="176.600" cy="472.500" r="3.100" fill="none" stroke="#2e2e2e" stroke-width="1.200"/>
<path d="M178.900,474.900 L181.400,477.500" stroke="#3a3a3a" stroke-width="1.200" stroke-linecap="round"/>
<!-- fish doodle -->
<g filter="url(#b0)">
<path d="M270.500,479.300 Q280,478.200 292,479.600 L292,480.400 Q280,479.600 270.500,480.200Z" fill="#3aa8e8"/>
<ellipse cx="277" cy="472.400" rx="6.600" ry="4" fill="#f2861c"/>
<path d="M270.600,472.400 L268.600,469.600 Q267.800,472.400 268.600,475.400Z" fill="#ee7a18"/>
<path d="M272.600,469.200 Q271.600,472.400 272.800,475.600 M276.800,468.500 Q275.800,472.400 277,476.300 M280.600,469.200 Q279.800,472.400 280.800,475.600" stroke="#fffaf0" stroke-width="1.300" fill="none"/>
<path d="M273.600,469 Q272.700,472.400 273.800,475.800 M277.900,468.400 Q277,472.400 278.100,476.400" stroke="#2a1a10" stroke-width="0.400" fill="none"/>
<circle cx="282" cy="471.800" r="0.700" fill="#1a1208"/>
<path d="M285,480 Q284,474 287,471.600 Q288.400,474 288.800,476 Q289.600,471.600 292.400,470.800 Q292.800,474 292,476.600 Q294.400,474 297,474.400 Q296,478.600 292,480.200Z" fill="#ee8a4a"/>
<path d="M284.600,480.400 Q286,476.400 290,477.800 Q294,476 297.600,477.400 Q296,481 290,481Z" fill="#7a78d8"/>
<path d="M287.600,473 L288.200,476.200 M292.200,472 L291.400,476" stroke="#d84a7a" stroke-width="0.700"/>
</g>
<!-- task view -->
<rect x="306.900" y="470" width="11.100" height="9.500" rx="1.200" fill="#1d1f22"/>
<rect x="310.800" y="466.300" width="10.900" height="10" rx="1.200" fill="#fbfbfb" fill-opacity="0.820" stroke="#d9d2cd" stroke-width="0.400"/>
<!-- copilot -->
<g filter="url(#b0)">
<path d="M335.600,469.200 Q336.600,466.400 339.600,466.400 L344,466.400 Q342,467.800 341.300,470.400 L339.600,476.800 Q338.900,479.500 336.600,479.500 Q333.400,479.300 334,476.200Z" fill="url(#gcpa)"/>
<path d="M346.800,476.700 Q345.800,479.500 342.800,479.500 L338.400,479.500 Q340.400,478.100 341.100,475.500 L342.800,469.100 Q343.500,466.400 345.800,466.400 Q349,466.600 348.400,469.700Z" fill="url(#gcpb)"/>
</g>
<!-- H slashes -->
<path d="M363.400,480 L367,466.400 M368.400,480 L372,466.400 M364.800,474 L370.600,472.800" stroke="#2222c8" stroke-width="1.500" stroke-linecap="round"/>
<!-- store -->
<rect x="387.600" y="468.600" width="13.900" height="11.600" rx="2" fill="#1a4886"/>
<path d="M391.400,468.800 Q391.400,466.600 394.500,466.600 Q397.600,466.600 397.600,468.800" fill="none" stroke="#2a6cb8" stroke-width="1.200"/>
<rect x="391.400" y="471.200" width="2.700" height="2.700" fill="#f25022"/><rect x="394.800" y="471.200" width="2.700" height="2.700" fill="#7fba00"/>
<rect x="391.400" y="474.600" width="2.700" height="2.700" fill="#00a4ef"/><rect x="394.800" y="474.600" width="2.700" height="2.700" fill="#ffb900"/>
<!-- /A app -->
<rect x="414.200" y="466" width="15" height="14.200" rx="1.400" fill="#1b73e0"/>
<rect x="423.600" y="466" width="5.600" height="14.200" fill="#4a96ee" opacity="0.550"/>
<path d="M417.600,477.600 L421.400,469 M420.800,477.600 L423.800,470 L426.600,477.600 M422.200,475.400 L425.600,475.400" stroke="#ffffff" stroke-width="1.500" fill="none" stroke-linecap="round" stroke-linejoin="round"/>
<!-- folder -->
<path d="M440.700,467.400 Q440.700,466.400 441.700,466.400 L446.400,466.400 L448,468.200 L455.300,468.200 Q456.300,468.200 456.300,469.200 L456.300,479.900 L440.700,479.900Z" fill="#e6a81e"/>
<rect x="440.700" y="469.600" width="15.600" height="10.300" rx="1" fill="#fbd03a"/>
<rect x="444.200" y="476" width="8.600" height="3.900" rx="0.800" fill="#2a78d8"/>
<!-- edge -->
<circle cx="475.200" cy="473" r="7.400" fill="url(#ged)"/>
<path d="M468.600,470 Q472,465 478.600,466.400 Q482.800,468.600 482.600,473.600 Q480.400,468.800 475.600,469 Q471.400,469.200 468.600,470Z" fill="#4fd26c"/>
<path d="M470.200,474.800 Q471,471.200 475.200,471 Q479.600,471 480.800,474.600 Q478.600,473.200 476.400,474.200 Q474.400,476 476.800,478.600 Q472.400,479.400 470.200,474.800Z" fill="#ffffff" opacity="0.950"/>
<rect x="473.400" y="483.400" width="3.600" height="1.200" rx="0.600" fill="#8b8480"/>
<!-- zoom app -->
<rect x="493.900" y="465.200" width="15.600" height="15.600" rx="6.800" fill="#0b5cff"/>
<circle cx="509.100" cy="469.200" r="2.400" fill="#e8343f"/>
<rect x="497" y="482.800" width="9.400" height="2.200" rx="1.100" fill="#1a6fd8"/>
<!-- whatsapp -->
<circle cx="528.700" cy="472.800" r="6.600" fill="#f1f7ee" stroke="#2a8a45" stroke-width="1.700"/>
<path d="M521.800,480.600 L523,476.200 L526,478.800Z" fill="#2a8a45"/>
<path d="M526,469.400 Q525,472.200 527.800,474.600 Q530.400,476.800 532.400,475.400 L531.200,473.800 L530,474.400 Q528.200,473.200 527.600,471.600 L528.200,470.400 L527.200,469Z" fill="#2a8a45"/>
<rect x="526.900" y="483.400" width="3.600" height="1.200" rx="0.600" fill="#8b8480"/>
<!-- tray chevron -->
<path d="M584.200,475 L586.900,472.200 L589.600,475" stroke="#2c2c2c" stroke-width="1.100" fill="none" stroke-linecap="round" stroke-linejoin="round"/>
<!-- onedrive-like (white tile + blue cloud) -->
<rect x="601.600" y="468.600" width="9.800" height="9.200" rx="1.200" fill="#fdfdfd"/>
<path d="M604.400,475.800 Q602.700,475.800 602.700,474.200 Q602.700,472.800 604.200,472.600 Q604.400,470.600 606.600,470.600 Q608.400,470.600 609,472.200 Q610.600,472.300 610.600,474 Q610.600,475.800 609,475.800Z" fill="none" stroke="#3a80e0" stroke-width="1.050" stroke-linejoin="round"/>
<!-- gray tool w/ red dot -->
<path d="M622.800,470.400 Q622.800,468.800 625.600,468.800 Q628.400,468.800 628.400,470.400 L628,476.200 Q627.800,477.400 625.600,477.400 Q623.400,477.400 623.200,476.200Z" fill="#cfcaca" stroke="#aaa4a4" stroke-width="0.500"/>
<path d="M623.400,470.600 L627.800,470.600" stroke="#9c9696" stroke-width="0.600"/>
<circle cx="628.200" cy="475.800" r="1.800" fill="#ee2a24"/>
<!-- gray cloud -->
<path d="M642.600,476.200 Q640.600,476.200 640.600,474.400 Q640.600,472.800 642.400,472.600 Q642.900,469.800 645.800,469.800 Q648.300,469.800 649,471.900 Q651.200,472 651.200,474.200 Q651.200,476.200 649.200,476.200Z" fill="#b4b0ae" stroke="#4a4644" stroke-width="0.950" stroke-linejoin="round"/>
<!-- mic + location (blue) -->
<rect x="660" y="468.200" width="3.200" height="5.400" rx="1.600" fill="none" stroke="#3a6fc8" stroke-width="0.850"/>
<path d="M658.800,472.400 Q658.800,475.400 661.600,475.400 Q664.400,475.400 664.400,472.400 M661.600,475.400 L661.600,477" stroke="#3a6fc8" stroke-width="0.750" fill="none"/>
<path d="M665.800,473.800 L671.600,471.400 L669.400,477.400 L668.400,474.800Z" fill="none" stroke="#3a6fc8" stroke-width="0.900" stroke-linejoin="round"/>
<!-- wifi -->
<path d="M680,471.200 Q684.800,467.200 689.600,471.200 M681.600,473.200 Q684.800,470.600 688,473.200 M683.200,475.200 Q684.800,474 686.400,475.200" stroke="#6a6664" stroke-width="1" fill="none" stroke-linecap="round"/>
<circle cx="684.800" cy="477" r="0.800" fill="#6a6664"/>
<!-- volume -->
<path d="M694.600,472 L696.400,472 L698.800,469.800 L698.800,477.200 L696.400,475 L694.600,475Z" fill="none" stroke="#5a5856" stroke-width="0.800" stroke-linejoin="round"/>
<path d="M700.600,471.600 Q702,473.500 700.600,475.400 M702.400,470.200 Q704.600,473.500 702.400,476.800" stroke="#5a5856" stroke-width="0.800" fill="none" stroke-linecap="round"/>
<!-- battery -->
<rect x="709.400" y="470.600" width="11.600" height="5.400" rx="1.600" fill="#259a2f" stroke="#1f6a26" stroke-width="0.700"/>
<rect x="721.200" y="472.200" width="0.900" height="2.200" fill="#1f6a26"/>
<path d="M712.600,471.200 L715.200,473.600 L717.800,471.200 L717.800,470.600 L712.600,470.600Z" fill="#f1e2da" opacity="0.900"/><circle cx="715.200" cy="470" r="1.100" fill="#1f2f22"/>
<!-- scrollbar arrow of app behind -->
<path d="M767.700,449 L772.300,449 L770,452.400Z" fill="#8a8a8a"/>
</svg>
<span class="t" style="left:188.40px;top:468.74px;font-size:9.4px;font-weight:400;color:#77716d;transform:scaleX(0.8360);">Search</span>
<span class="t" style="left:18.90px;top:464.68px;font-size:6.4px;font-weight:700;color:#ffffff;transform:scaleX(0.8990);">3</span>
<span class="t" style="left:496.60px;top:470.84px;font-size:4.2px;font-weight:700;color:#dfe8ff;transform:scaleX(0.9302);">zoom</span>
<span class="t" style="left:738.50px;top:464.65px;font-size:7.5px;font-weight:400;color:#3c3c3c;transform:scaleX(0.9557);">7:07 AM</span>
<span class="t" style="left:731.50px;top:474.35px;font-size:7.5px;font-weight:400;color:#3c3c3c;transform:scaleX(0.9980);">4/14/2026</span>
<div class="a" style="left:183px;top:454.400px;width:96px;height:3.400px;overflow:hidden;"><span class="t" style="left:0;top:-4.600px;font-size:7.600px;color:#666;">Rows (Rush) (10 more)</span></div>
<div class="a" style="left:468px;top:454.400px;width:96px;height:3.400px;overflow:hidden;"><span class="t" style="left:0;top:-4.600px;font-size:7.600px;color:#666;">Rows (Rush) (10 more)</span></div>
</div>
</body>
</html>
